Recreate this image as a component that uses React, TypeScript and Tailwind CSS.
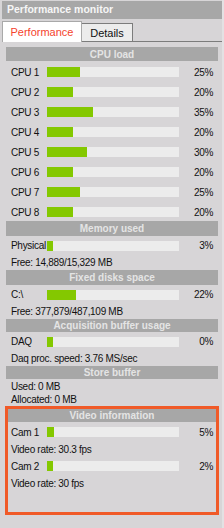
import React from 'react';

interface BarRowProps {
  label: string;
  pct: number;
  h: string;
  inset?: boolean;
}

// percent bar: track 132px, fill never thinner than 6px
const BarRow: React.FC<BarRowProps> = ({ label, pct, h, inset }) => (
  <div className={`${h} flex items-center ${inset ? 'px-[3px]' : 'px-[5px]'}`}>
    <span className="w-[36px] shrink-0 whitespace-nowrap">{label}</span>
    <div className="w-[132px] h-[10px] bg-[#ececec] shrink-0">
      <div className="h-full bg-[#84c800]" style={{ width: Math.max(6, Math.round((pct * 132) / 100)) }} />
    </div>
    <span className="flex-1 text-right">{pct}%</span>
  </div>
);

const SectionHeader: React.FC<{ title: string; h: string }> = ({ title, h }) => (
  <div className={`${h} bg-[#a7a7a7] text-[#e4e4e4] font-bold tracking-normal flex items-center justify-center`}>
    {title}
  </div>
);

const TextRow: React.FC<{ text: string; h: string; inset?: boolean }> = ({ text, h, inset }) => (
  <div className={`${h} flex items-center whitespace-nowrap ${inset ? 'pl-[3px]' : 'pl-[5px]'}`}>{text}</div>
);

const cpus = [25, 20, 35, 20, 30, 20, 25, 20];

export default function App() {
  return (
    <div className="w-[224px] h-[528px] bg-[#d7d5d7] border-r-2 border-[#e3e1e3] pl-[2px] pt-[1px] flex flex-col overflow-hidden font-['Liberation_Sans',Arial,sans-serif] text-[#111]">
      {/* title bar */}
      <div className="h-[18px] shrink-0 bg-[#a7a7a7] text-[#f6f6f6] font-bold text-[10.5px] pl-[5px] flex items-center">
        Performance monitor
      </div>

      {/* tabs */}
      <div className="mt-[2px] h-[21px] shrink-0 flex items-end text-[11px]">
        <div className="w-[80px] h-[21px] bg-white border border-b-0 border-[#a9a9a9] text-[#f5432d] flex items-center justify-center pt-[1px]">
          Performance
        </div>
        <div className="w-[51px] h-[19px] bg-[#ececec] border-t border-r border-b border-[#7c7c7c] flex items-center justify-center pt-[2px]">
          Details
        </div>
        <div className="flex-1 h-[1px] mb-0 bg-[#7c7c7c]" />
      </div>

      <div className="mt-[5px] mx-[4px] flex flex-col text-[10px] tracking-[-0.3px]">
        <SectionHeader title="CPU load" h="h-[14px]" />
        {cpus.map((p, i) => (
          <div key={i} className="pt-[2px]">
            <BarRow label={`CPU ${i + 1}`} pct={p} h="h-[18px]" />
          </div>
        ))}

        <SectionHeader title="Memory used" h="h-[15px]" />
        <BarRow label="Physical" pct={3} h="h-[19px]" />
        <TextRow text="Free: 14,889/15,329 MB" h="h-[15px]" />

        <SectionHeader title="Fixed disks space" h="h-[15px]" />
        <BarRow label="C:\" pct={22} h="h-[19px]" />
        <TextRow text="Free: 377,879/487,109 MB" h="h-[15px]" />

        <SectionHeader title="Acquisition buffer usage" h="h-[13px]" />
        <BarRow label="DAQ" pct={0} h="h-[19px]" />
        <TextRow text="Daq proc. speed: 3.76 MS/sec" h="h-[15px]" />

        <SectionHeader title="Store buffer" h="h-[13px]" />
        <TextRow text="Used: 0 MB" h="h-[14px]" />
        <TextRow text="Allocated: 0 MB" h="h-[13px]" />

        {/* highlighted video block */}
        <div className="-mx-[1px] h-[109px] border-[3px] border-[#f05a28] flex flex-col">
          <SectionHeader title="Video information" h="h-[13px]" />
          <BarRow label="Cam 1" pct={5} h="h-[20px]" inset />
          <TextRow text="Video rate: 30.3 fps" h="h-[14px]" inset />
          <BarRow label="Cam 2" pct={2} h="h-[20px]" inset />
          <TextRow text="Video rate: 30 fps" h="h-[14px]" inset />
        </div>
      </div>
    </div>
  );
}
